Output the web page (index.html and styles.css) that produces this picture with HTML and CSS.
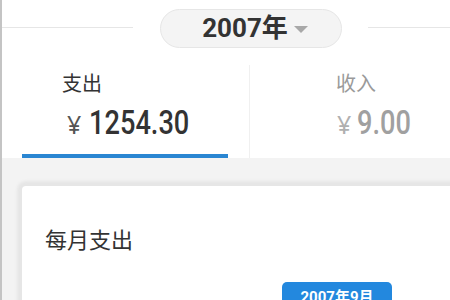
FILE: index.html
```html
<!DOCTYPE html>
<html lang="zh-CN">
<head>
<meta charset="utf-8">
<link rel="stylesheet" href="styles.css">
</head>
<body>
<div class="page">
  <div class="header">
    <div class="line line-left"></div>
    <div class="pill">
      <span class="year">2007年</span>
      <span class="caret"></span>
    </div>
    <div class="line line-right"></div>
  </div>
  <div class="tabs">
    <div class="tab active">
      <div class="tab-label">支出</div>
      <div class="amount"><span class="yen">¥</span><span class="num">1254.30</span></div>
      <div class="underline"></div>
    </div>
    <div class="tab income">
      <div class="tab-label">收入</div>
      <div class="amount"><span class="yen">¥</span><span class="num">9.00</span></div>
    </div>
  </div>
  <div class="content">
    <div class="card">
      <div class="card-title">每月支出</div>
      <div class="chart">
        <div class="tooltip">2007年9月</div>
      </div>
    </div>
  </div>
</div>
</body>
</html>
```
FILE: styles.css
```css
html, body {
  margin: 0;
  padding: 0;
  width: 450px;
  height: 300px;
  overflow: hidden;
  background: #fff;
}
.page {
  font-family: "Noto Sans CJK SC", "Noto Sans", sans-serif;
  border-left: 2px solid #c4c4c4;
  height: 300px;
  box-sizing: border-box;
  color: #333;
}
.header {
  display: flex;
  align-items: center;
  height: 57px;
}
.line {
  height: 1px;
  background: #e6e6e6;
  margin-bottom: 3px;
}
.line-left { width: 131px; margin-right: 27px; }
.line-right { flex: 1; margin-left: 26px; }
.pill {
  width: 182px;
  height: 39px;
  box-sizing: border-box;
  border: 1px solid #e6e6e6;
  background: #f4f4f4;
  border-radius: 20px;
  display: flex;
  align-items: center;
  justify-content: center;
  gap: 6px;
  margin-bottom: 1px;
  padding-left: 8px;
}
.year {
  font-family: "Roboto", "Noto Sans CJK SC", sans-serif;
  font-weight: bold;
  font-size: 26px;
  color: #333;
  line-height: 1;
}
.caret {
  width: 0;
  height: 0;
  border-left: 7px solid transparent;
  border-right: 7px solid transparent;
  border-top: 7px solid #a8a8a8;
  margin-top: 3px;
}
.tabs {
  display: flex;
  height: 101px;
}
.tab {
  position: relative;
  box-sizing: border-box;
}
.tab.active {
  width: 248px;
  padding-left: 60px;
  border-right: 1px solid #f0f0f0;
  margin-top: 8px;
  padding-top: 4px;
}
.tab.income {
  flex: 1;
  padding-left: 86px;
  margin-top: 8px;
  padding-top: 4px;
}
.tab-label {
  font-size: 20px;
  line-height: 28px;
  color: #333;
}
.income .tab-label { color: #9a9a9a; }
.amount {
  display: flex;
  align-items: baseline;
  margin-top: 8px;
  line-height: 34px;
}
.yen {
  font-family: "Noto Sans", sans-serif;
  font-size: 25px;
  color: #555;
  margin-left: 5px;
  margin-right: 8px;
}
.num {
  display: inline-block;
  font-family: "Roboto", sans-serif;
  font-weight: 500;
  font-size: 34px;
  color: #333;
  transform: scaleX(0.8);
  transform-origin: left center;
}
.income .yen { color: #b0b0b0; margin-left: 1px; margin-right: 6px; }
.income .num { color: #a0a0a0; }
.underline {
  position: absolute;
  left: 20px;
  bottom: 0;
  width: 206px;
  height: 4px;
  background: #2a86d2;
}
.content {
  background: #f3f3f3;
  height: 142px;
  padding: 28px 0 0 20px;
  box-sizing: border-box;
}
.card {
  background: #fff;
  height: 200px;
  border-radius: 4px 0 0 0;
  box-shadow: 0 0 3px 5px #e6e6e6;
  padding: 39px 0 0 23px;
  box-sizing: border-box;
}
.card-title {
  font-size: 22px;
  line-height: 26px;
  color: #333;
}
.chart {
  position: relative;
  height: 80px;
}
.tooltip {
  position: absolute;
  left: 237px;
  top: 31px;
  width: 110px;
  height: 30px;
  box-sizing: border-box;
  background: #2388de;
  border-radius: 5px;
  color: #fff;
  font-family: "Roboto", "Noto Sans CJK SC", sans-serif;
  font-weight: bold;
  font-size: 15px;
  text-align: center;
  line-height: 30px;
}
```
